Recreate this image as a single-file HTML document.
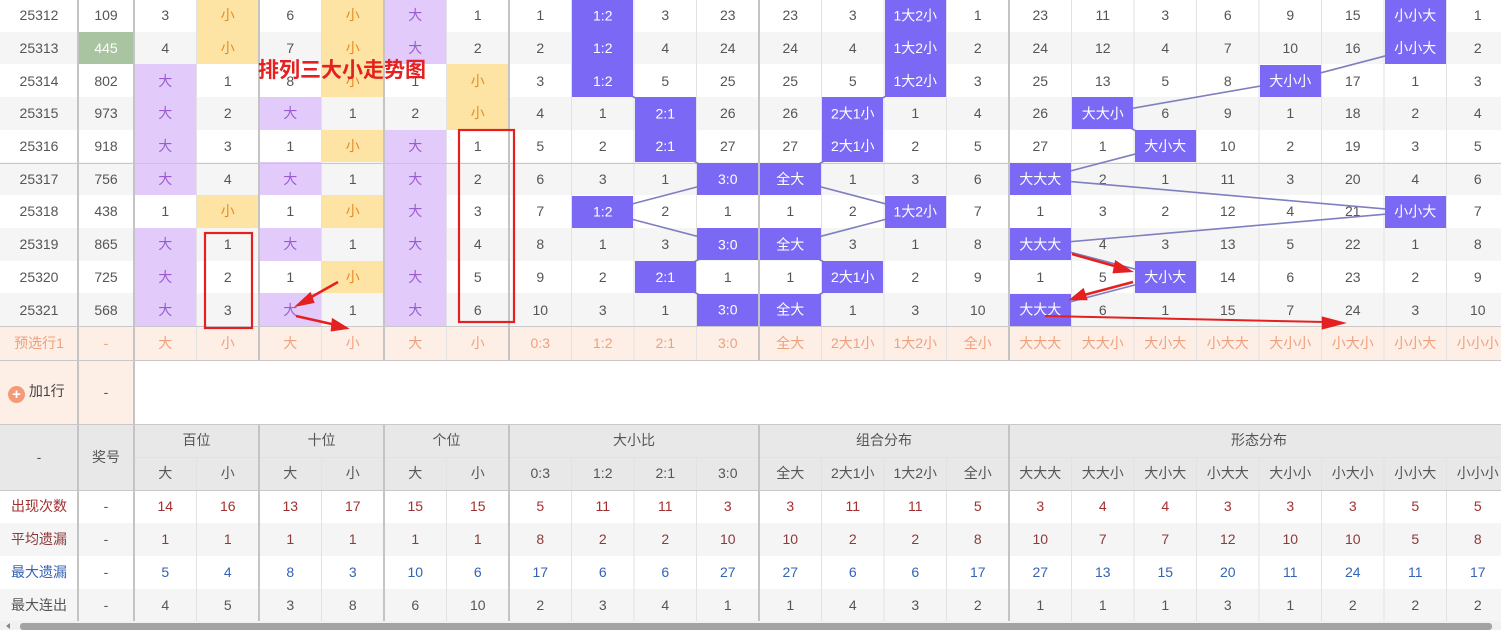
<!DOCTYPE html>
<html><head><meta charset="utf-8">
<style>
body{margin:0;width:1501px;height:630px;overflow:hidden;background:#fff;font-family:"Liberation Sans","Noto Sans CJK SC",sans-serif;}
#w{position:relative;width:1501px;height:630px;overflow:hidden;}
table{position:absolute;left:0;top:-1px;border-collapse:collapse;table-layout:fixed;width:1509px;}
td{padding:0;text-align:center;font-size:14px;color:#555;white-space:nowrap;overflow:hidden;}
tr.d td{height:32.7px;}
tr.d:nth-child(even) td{background:#f5f5f5;}
td.b{background:#e2cbfb!important;color:#9a5bd2;}
td.s{background:#fde4a5!important;color:#e58b25;}
td.g{background:#a8c4a0!important;color:#fff;}
tr.p td{height:34px;background:#fdeee6;color:#f0a07c;}
tr.a td{height:64px;background:#fff;}
tr.h td{height:33px;background:#e8e8e8;color:#555;}
tr.st td{height:33px;}
tr.st:nth-child(even) td{background:#f5f5f5;}
.r1 td{color:#a03030}.r2 td{color:#8b3a3a}.r3 td{color:#3563b5}.r4 td{color:#555}
svg{position:absolute;left:0;top:0;}
</style></head><body><div id="w">
<table>
<colgroup><col style="width:78px"><col style="width:56px"><col span="22" style="width:62.5px"></colgroup>
<tbody>
<tr class="d"><td>25312</td><td>109</td><td>3</td><td class="s">小</td><td>6</td><td class="s">小</td><td class="b">大</td><td>1</td><td>1</td><td></td><td>3</td><td>23</td><td>23</td><td>3</td><td></td><td>1</td><td>23</td><td>11</td><td>3</td><td>6</td><td>9</td><td>15</td><td></td><td>1</td></tr>
<tr class="d"><td>25313</td><td class="g">445</td><td>4</td><td class="s">小</td><td>7</td><td class="s">小</td><td class="b">大</td><td>2</td><td>2</td><td></td><td>4</td><td>24</td><td>24</td><td>4</td><td></td><td>2</td><td>24</td><td>12</td><td>4</td><td>7</td><td>10</td><td>16</td><td></td><td>2</td></tr>
<tr class="d"><td>25314</td><td>802</td><td class="b">大</td><td>1</td><td>8</td><td class="s">小</td><td>1</td><td class="s">小</td><td>3</td><td></td><td>5</td><td>25</td><td>25</td><td>5</td><td></td><td>3</td><td>25</td><td>13</td><td>5</td><td>8</td><td></td><td>17</td><td>1</td><td>3</td></tr>
<tr class="d"><td>25315</td><td>973</td><td class="b">大</td><td>2</td><td class="b">大</td><td>1</td><td>2</td><td class="s">小</td><td>4</td><td>1</td><td></td><td>26</td><td>26</td><td></td><td>1</td><td>4</td><td>26</td><td></td><td>6</td><td>9</td><td>1</td><td>18</td><td>2</td><td>4</td></tr>
<tr class="d"><td>25316</td><td>918</td><td class="b">大</td><td>3</td><td>1</td><td class="s">小</td><td class="b">大</td><td>1</td><td>5</td><td>2</td><td></td><td>27</td><td>27</td><td></td><td>2</td><td>5</td><td>27</td><td>1</td><td></td><td>10</td><td>2</td><td>19</td><td>3</td><td>5</td></tr>
<tr class="d"><td>25317</td><td>756</td><td class="b">大</td><td>4</td><td class="b">大</td><td>1</td><td class="b">大</td><td>2</td><td>6</td><td>3</td><td>1</td><td></td><td></td><td>1</td><td>3</td><td>6</td><td></td><td>2</td><td>1</td><td>11</td><td>3</td><td>20</td><td>4</td><td>6</td></tr>
<tr class="d"><td>25318</td><td>438</td><td>1</td><td class="s">小</td><td>1</td><td class="s">小</td><td class="b">大</td><td>3</td><td>7</td><td></td><td>2</td><td>1</td><td>1</td><td>2</td><td></td><td>7</td><td>1</td><td>3</td><td>2</td><td>12</td><td>4</td><td>21</td><td></td><td>7</td></tr>
<tr class="d"><td>25319</td><td>865</td><td class="b">大</td><td>1</td><td class="b">大</td><td>1</td><td class="b">大</td><td>4</td><td>8</td><td>1</td><td>3</td><td></td><td></td><td>3</td><td>1</td><td>8</td><td></td><td>4</td><td>3</td><td>13</td><td>5</td><td>22</td><td>1</td><td>8</td></tr>
<tr class="d"><td>25320</td><td>725</td><td class="b">大</td><td>2</td><td>1</td><td class="s">小</td><td class="b">大</td><td>5</td><td>9</td><td>2</td><td></td><td>1</td><td>1</td><td></td><td>2</td><td>9</td><td>1</td><td>5</td><td></td><td>14</td><td>6</td><td>23</td><td>2</td><td>9</td></tr>
<tr class="d"><td>25321</td><td>568</td><td class="b">大</td><td>3</td><td class="b">大</td><td>1</td><td class="b">大</td><td>6</td><td>10</td><td>3</td><td>1</td><td></td><td></td><td>1</td><td>3</td><td>10</td><td></td><td>6</td><td>1</td><td>15</td><td>7</td><td>24</td><td>3</td><td>10</td></tr>
<tr class="p"><td>预选行1</td><td>-</td><td>大</td><td>小</td><td>大</td><td>小</td><td>大</td><td>小</td><td>0:3</td><td>1:2</td><td>2:1</td><td>3:0</td><td>全大</td><td>2大1小</td><td>1大2小</td><td>全小</td><td>大大大</td><td>大大小</td><td>大小大</td><td>小大大</td><td>大小小</td><td>小大小</td><td>小小大</td><td>小小小</td></tr>
<tr class="a"><td style="background:#fdeee6;color:#444;text-align:left;padding-left:8px"><span style="display:inline-block;width:17px;height:17px;border-radius:50%;background:#f39b78;color:#fff;font-size:15px;line-height:17px;text-align:center;vertical-align:-3px;font-weight:bold">+</span> 加1行</td><td style="background:#fdeee6">-</td><td colspan="22"></td></tr>
<tr class="h"><td rowspan="2">-</td><td rowspan="2">奖号</td><td colspan="2">百位</td><td colspan="2">十位</td><td colspan="2">个位</td><td colspan="4">大小比</td><td colspan="4">组合分布</td><td colspan="8">形态分布</td></tr>
<tr class="h"><td>大</td><td>小</td><td>大</td><td>小</td><td>大</td><td>小</td><td>0:3</td><td>1:2</td><td>2:1</td><td>3:0</td><td>全大</td><td>2大1小</td><td>1大2小</td><td>全小</td><td>大大大</td><td>大大小</td><td>大小大</td><td>小大大</td><td>大小小</td><td>小大小</td><td>小小大</td><td>小小小</td></tr>
<tr class="st r1"><td>出现次数</td><td style="color:#555">-</td><td>14</td><td>16</td><td>13</td><td>17</td><td>15</td><td>15</td><td>5</td><td>11</td><td>11</td><td>3</td><td>3</td><td>11</td><td>11</td><td>5</td><td>3</td><td>4</td><td>4</td><td>3</td><td>3</td><td>3</td><td>5</td><td>5</td></tr>
<tr class="st r2"><td>平均遗漏</td><td style="color:#555">-</td><td>1</td><td>1</td><td>1</td><td>1</td><td>1</td><td>1</td><td>8</td><td>2</td><td>2</td><td>10</td><td>10</td><td>2</td><td>2</td><td>8</td><td>10</td><td>7</td><td>7</td><td>12</td><td>10</td><td>10</td><td>5</td><td>8</td></tr>
<tr class="st r3"><td>最大遗漏</td><td style="color:#555">-</td><td>5</td><td>4</td><td>8</td><td>3</td><td>10</td><td>6</td><td>17</td><td>6</td><td>6</td><td>27</td><td>27</td><td>6</td><td>6</td><td>17</td><td>27</td><td>13</td><td>15</td><td>20</td><td>11</td><td>24</td><td>11</td><td>17</td></tr>
<tr class="st r4"><td style="height:32px">最大连出</td><td>-</td><td>4</td><td>5</td><td>3</td><td>8</td><td>6</td><td>10</td><td>2</td><td>3</td><td>4</td><td>1</td><td>1</td><td>4</td><td>3</td><td>2</td><td>1</td><td>1</td><td>1</td><td>3</td><td>1</td><td>2</td><td>2</td><td>2</td></tr>
</tbody></table>

<svg width="1501" height="630" font-family="Liberation Sans, Noto Sans CJK SC, sans-serif">
<g stroke="#e2e2e2" stroke-width="1">
<path d="M196.5 0V360M321.5 0V360M446.5 0V360M571.5 0V360M634 0V360M696.5 0V360M821.5 0V360M884 0V360M946.5 0V360M1071.5 0V360M1134 0V360M1196.5 0V360M1259 0V360M1321.5 0V360M1384 0V360M1446.5 0V360"/>
<path d="M196.5 457V621M321.5 457V621M446.5 457V621M571.5 457V621M634 457V621M696.5 457V621M821.5 457V621M884 457V621M946.5 457V621M1071.5 457V621M1134 457V621M1196.5 457V621M1259 457V621M1321.5 457V621M1384 457V621M1446.5 457V621"/>
<path d="M134 457.5H1501"/>
</g>
<g stroke="#c4c4c4" stroke-width="2">
<path d="M78 0V621M134 0V621"/>
<path d="M259 0V360M384 0V360M509 0V360M759 0V360M1009 0V360"/>
<path d="M259 424V621M384 424V621M509 424V621M759 424V621M1009 424V621"/>
</g>
<g stroke="#c8c8c8" stroke-width="1">
<path d="M0 163.5H1501M0 326.5H1501M0 360.5H1501M0 424.5H1501M0 490.5H1501"/>
</g>
<g fill="none" stroke="#7f7fc0" stroke-width="1.6">
<polyline points="602.75,-20 602.75,15.4 602.75,48.1 602.75,80.8 665.25,113.5 665.25,146.2 727.75,178.9 602.75,211.6 727.75,244.3 665.25,277 727.75,309.7"/>
<polyline points="915.25,15.4 915.25,48.1 915.25,80.8 852.75,113.5 852.75,146.2 790.25,178.9 915.25,211.6 790.25,244.3 852.75,277 790.25,309.7"/>
<polyline points="1415.25,15.4 1415.25,48.1 1290.25,80.8 1102.75,113.5 1165.25,146.2 1040.25,178.9 1415.25,211.6 1040.25,244.3 1165.25,277 1040.25,309.7"/>
</g>
<g fill="#7b69f5">
<rect x="572" y="-1" width="61" height="98"/>
<rect x="635" y="97" width="61" height="65"/>
<rect x="697" y="163" width="61" height="32"/>
<rect x="572" y="196" width="61" height="32"/>
<rect x="697" y="228" width="61" height="32"/>
<rect x="635" y="261" width="61" height="32"/>
<rect x="697" y="294" width="61" height="32"/>
<rect x="885" y="-1" width="61" height="98"/>
<rect x="822" y="97" width="61" height="65"/>
<rect x="760" y="163" width="61" height="32"/>
<rect x="885" y="196" width="61" height="32"/>
<rect x="760" y="228" width="61" height="32"/>
<rect x="822" y="261" width="61" height="32"/>
<rect x="760" y="294" width="61" height="32"/>
<rect x="1385" y="-1" width="61" height="65"/>
<rect x="1260" y="65" width="61" height="32"/>
<rect x="1072" y="97" width="61" height="32"/>
<rect x="1135" y="130" width="61" height="32"/>
<rect x="1010" y="163" width="61" height="32"/>
<rect x="1385" y="196" width="61" height="32"/>
<rect x="1010" y="228" width="61" height="32"/>
<rect x="1135" y="261" width="61" height="32"/>
<rect x="1010" y="294" width="61" height="32"/>
</g>
<g fill="#fff" font-size="14" text-anchor="middle">
<text x="602.75" y="20.4">1:2</text><text x="602.75" y="53.1">1:2</text><text x="602.75" y="85.8">1:2</text>
<text x="665.25" y="118.5">2:1</text><text x="665.25" y="151.2">2:1</text><text x="727.75" y="183.9">3:0</text>
<text x="602.75" y="216.6">1:2</text><text x="727.75" y="249.3">3:0</text><text x="665.25" y="282">2:1</text><text x="727.75" y="314.7">3:0</text>
<text x="915.25" y="20.4">1大2小</text><text x="915.25" y="53.1">1大2小</text><text x="915.25" y="85.8">1大2小</text>
<text x="852.75" y="118.5">2大1小</text><text x="852.75" y="151.2">2大1小</text><text x="790.25" y="183.9">全大</text>
<text x="915.25" y="216.6">1大2小</text><text x="790.25" y="249.3">全大</text><text x="852.75" y="282">2大1小</text><text x="790.25" y="314.7">全大</text>
<text x="1415.25" y="20.4">小小大</text><text x="1415.25" y="53.1">小小大</text><text x="1290.25" y="85.8">大小小</text>
<text x="1102.75" y="118.5">大大小</text><text x="1165.25" y="151.2">大小大</text><text x="1040.25" y="183.9">大大大</text>
<text x="1415.25" y="216.6">小小大</text><text x="1040.25" y="249.3">大大大</text><text x="1165.25" y="282">大小大</text><text x="1040.25" y="314.7">大大大</text>
</g>
<text x="258" y="77" font-size="21" font-weight="bold" fill="#e42020">排列三大小走势图</text>
<g fill="none" stroke="#e42020" stroke-width="2.2">
<rect x="459" y="130" width="55" height="192"/>
<rect x="205" y="233" width="47" height="95"/>
</g>
<g stroke="#e42020" stroke-width="2.5" fill="#e42020">
<line x1="338" y1="282" x2="306" y2="300"/><polygon points="298,305 310,294 313,302"/>
<line x1="296" y1="316" x2="336" y2="325"/><polygon points="346,328 333,320 332,330"/>
<line x1="1072" y1="254" x2="1118" y2="267"/><polygon points="1130,271 1116,262 1114,272"/>
<line x1="1133" y1="282" x2="1084" y2="295"/><polygon points="1072,299 1083,290 1086,299"/>
<line x1="1045" y1="316" x2="1325" y2="322" stroke-width="2"/><polygon points="1342,323 1323,318 1323,328"/>
</g>
<rect x="0" y="621" width="1501" height="9" fill="#f1f1f1"/>
<rect x="20" y="623" width="1472" height="7" rx="3" fill="#a3a3a3"/>
<polygon points="6,626 10,623 10,629" fill="#888"/>
</svg>
</div></body></html>
